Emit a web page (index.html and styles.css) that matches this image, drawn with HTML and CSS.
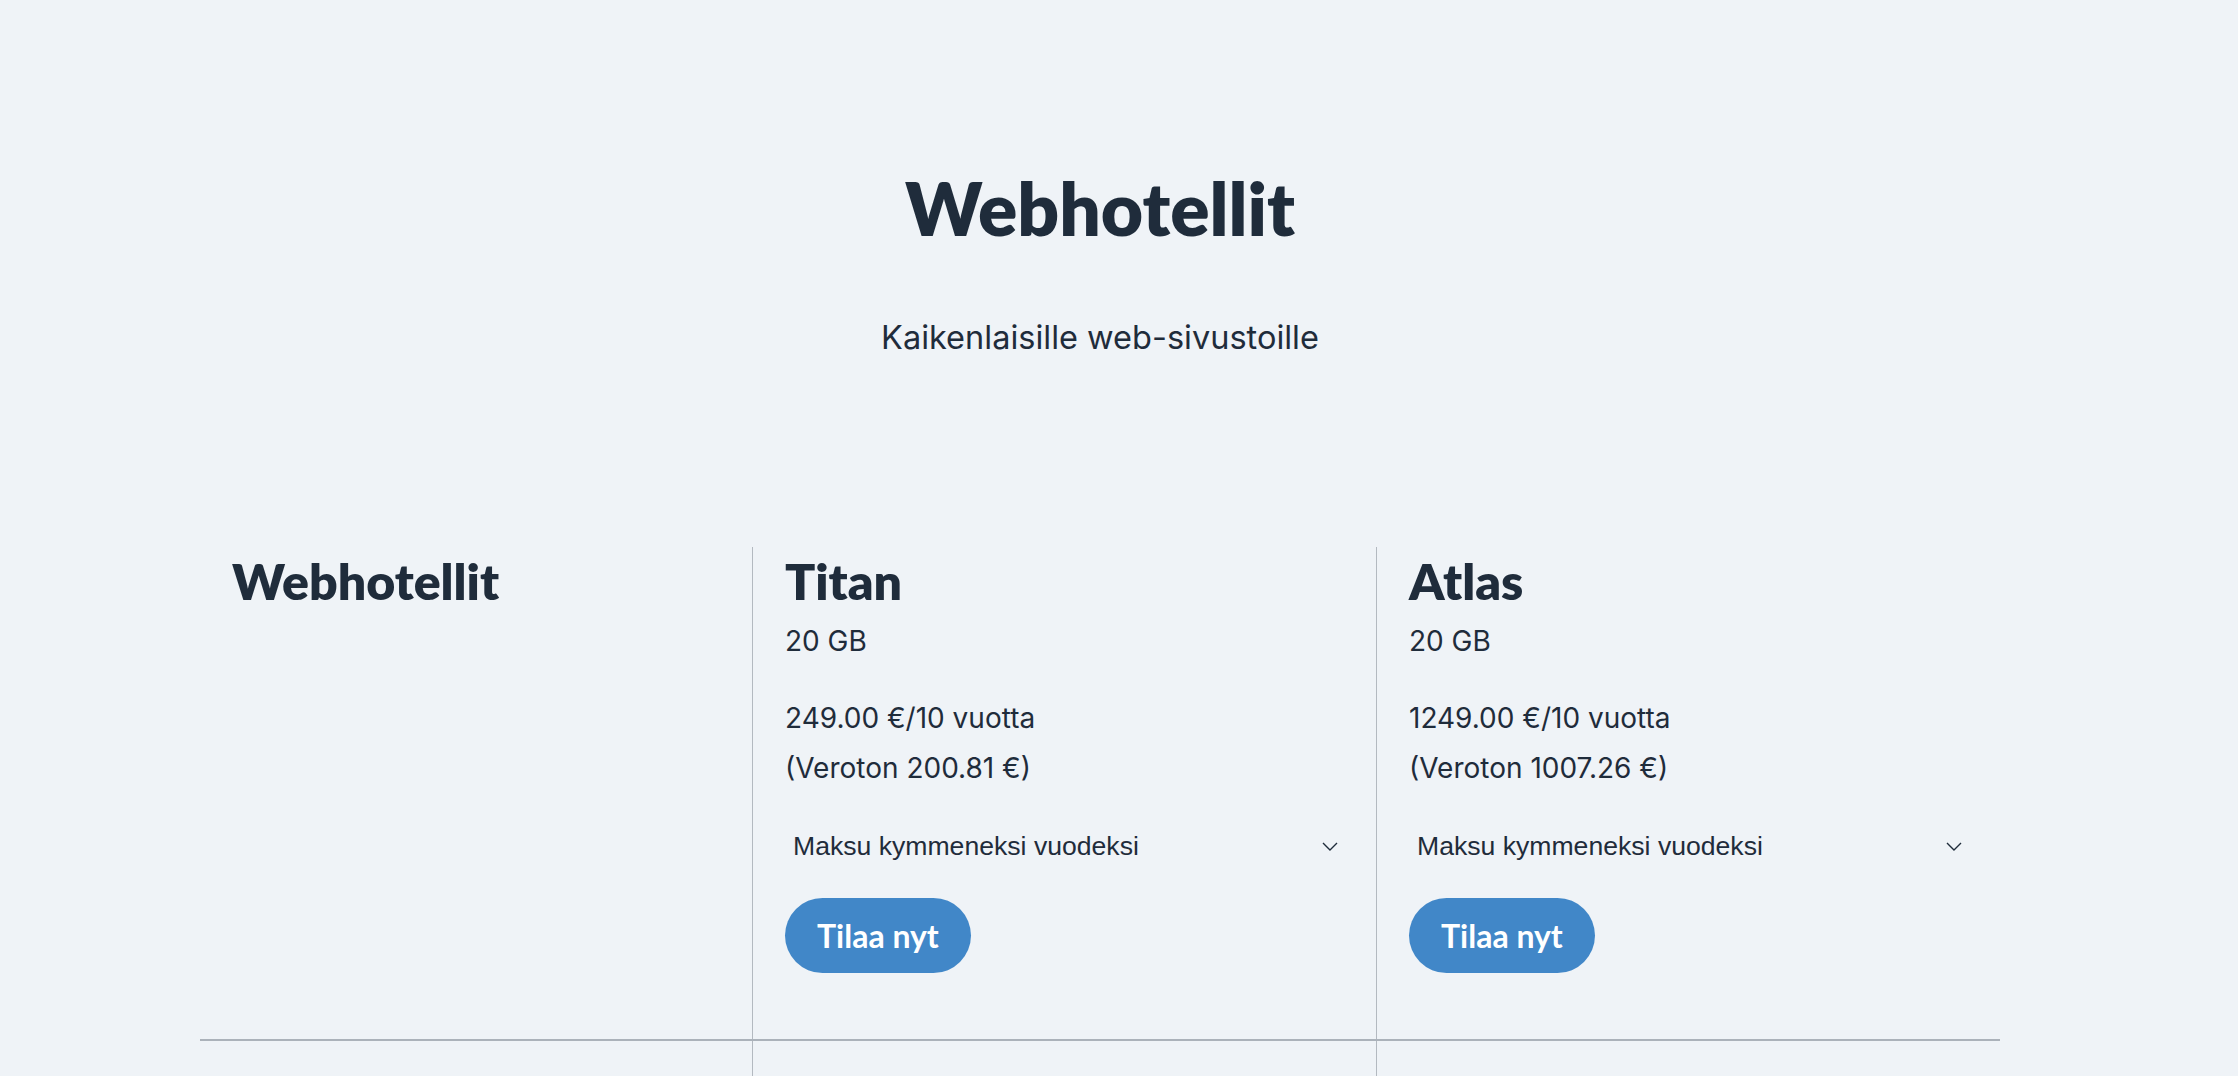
FILE: index.html
```html
<!DOCTYPE html>
<html lang="fi">
<head>
<meta charset="utf-8">
<title>Webhotellit</title>
<link rel="stylesheet" href="styles.css">
</head>
<body>
<main class="page">
  <header class="hero">
    <h1 class="hero-title">Webhotellit</h1>
    <p class="hero-sub">Kaikenlaisille web-sivustoille</p>
  </header>

  <section class="compare">
    <div class="row row-head">
      <div class="cell cell-label">
        <h2 class="cell-title">Webhotellit</h2>
      </div>
      <div class="cell cell-plan">
        <h2 class="cell-title">Titan</h2>
        <p class="plan-size">20 GB</p>
        <p class="plan-price">249.00 €/10 vuotta</p>
        <p class="plan-price">(Veroton 200.81 €)</p>
        <div class="select-wrap">
          <select class="period">
            <option>Maksu kymmeneksi vuodeksi</option>
          </select>
          <svg class="chev" viewBox="0 0 16 9" width="16" height="9"><path d="M1 1l7 7 7-7" fill="none" stroke="#1f2c3b" stroke-width="1.4"/></svg>
        </div>
        <button class="order">Tilaa nyt</button>
      </div>
      <div class="cell cell-plan">
        <h2 class="cell-title">Atlas</h2>
        <p class="plan-size">20 GB</p>
        <p class="plan-price">1249.00 €/10 vuotta</p>
        <p class="plan-price">(Veroton 1007.26 €)</p>
        <div class="select-wrap">
          <select class="period">
            <option>Maksu kymmeneksi vuodeksi</option>
          </select>
          <svg class="chev" viewBox="0 0 16 9" width="16" height="9"><path d="M1 1l7 7 7-7" fill="none" stroke="#1f2c3b" stroke-width="1.4"/></svg>
        </div>
        <button class="order">Tilaa nyt</button>
      </div>
    </div>
    <div class="row row-body">
      <div class="cell cell-label"></div>
      <div class="cell cell-plan"></div>
      <div class="cell cell-plan"></div>
    </div>
  </section>
</main>
</body>
</html>
```

FILE: styles.css
```css
html, body {
  margin: 0;
  padding: 0;
  background: #eff3f7;
}
body {
  color: #1f2c3b;
  font-family: Lato, "Noto Sans", sans-serif;
}
.page {
  width: 1800px;
  margin-left: 200px;
}
.hero {
  text-align: center;
  padding-top: 158px;
}
.hero-title {
  margin: 0;
  font-size: 73px;
  line-height: 100px;
  font-weight: 800;
}
.hero-sub {
  margin: 55px 0 0;
  font-family: Inter, "Open Sans", sans-serif;
  font-size: 32.5px;
  line-height: 50px;
  font-weight: 400;
}
.compare {
  margin-top: 184px;
}
.row {
  display: grid;
  grid-template-columns: 552px 1fr 1fr;
}
.row-head {
  border-bottom: 2px solid #abb2ba;
}
.row-body {
  min-height: 300px;
}
.cell {
  padding: 4px 32px 0;
}
.cell-plan {
  border-left: 1px solid #b3b9c0;
}
.row-head .cell {
  padding-bottom: 66px;
}
.cell-title {
  margin: 0;
  font-size: 50px;
  line-height: 60px;
  font-weight: 800;
}
.plan-size,
.plan-price {
  font-family: Inter, "Open Sans", sans-serif;
  font-size: 28px;
  line-height: 50px;
}
.plan-size {
  margin: 5px 0 27px;
}
.plan-price {
  margin: 0;
}
.select-wrap {
  position: relative;
  margin-top: 29px;
}
.period {
  appearance: none;
  -webkit-appearance: none;
  display: block;
  width: 100%;
  height: 48px;
  padding: 0 40px 0 8px;
  border: none;
  background: transparent;
  color: #1f2c3b;
  font-family: "Liberation Sans", Arial, sans-serif;
  font-size: 26.6px;
}
.chev {
  position: absolute;
  right: 6px;
  top: 20px;
}
.order {
  display: block;
  margin-top: 28px;
  padding: 18px 32px;
  border: none;
  border-radius: 40px;
  background: #4187c8;
  color: #ffffff;
  font-family: Lato, "Noto Sans", sans-serif;
  font-size: 32px;
  line-height: 39px;
  font-weight: 700;
}
```
